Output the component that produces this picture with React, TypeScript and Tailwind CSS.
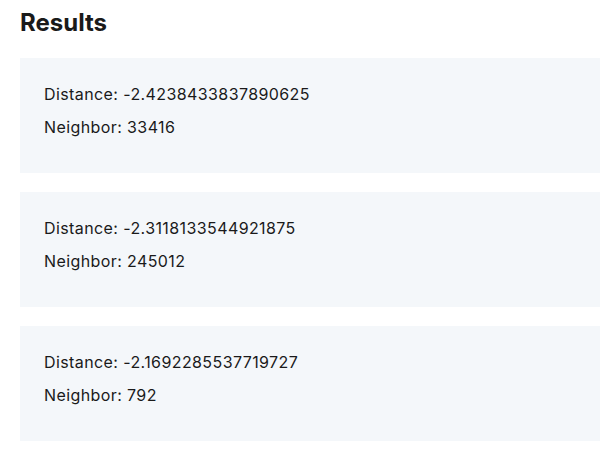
const results = [
  { distance: "-2.4238433837890625", neighbor: "33416" },
  { distance: "-2.3118133544921875", neighbor: "245012" },
  { distance: "-2.1692285537719727", neighbor: "792" },
];

export default function App() {
  return (
    <div className="w-full min-h-screen bg-white pl-5 text-[#1a1a1a] font-['Inter',sans-serif]">
      <h2 className="pt-[7px] text-2xl leading-8 font-bold">Results</h2>
      <div className="mt-[19px] flex flex-col gap-[19px]">
        {results.map((r) => (
          <div key={r.neighbor} className="bg-[#f4f7fa] pl-6 pt-6 pb-[34px] flex flex-col gap-[9px]">
            <p className="text-base leading-6 tracking-[0.4px]">Distance: {r.distance}</p>
            <p className="text-base leading-6 tracking-[0.4px]">Neighbor: {r.neighbor}</p>
          </div>
        ))}
      </div>
    </div>
  );
}
